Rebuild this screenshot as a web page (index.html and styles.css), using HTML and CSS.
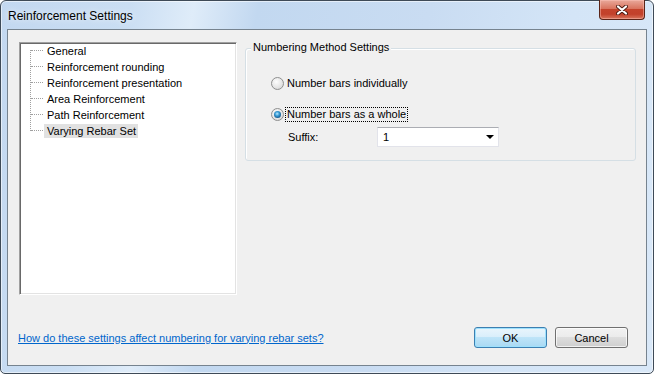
FILE: index.html
```html
<!DOCTYPE html>
<html>
<head>
    <title>Reinforcement Settings</title>
    <link rel="stylesheet" href="styles.css">
</head>
<body>
    <div class="window">
        <div class="titlebar">
            <span class="title">Reinforcement Settings</span>
            <div class="close-btn">
                <svg width="12" height="10" viewBox="0 0 12 10">
                    <path d="M2 1.5 L10 8.5 M10 1.5 L2 8.5" stroke="#4a1a12" stroke-width="4" stroke-linecap="round"/>
                    <path d="M2 1.5 L10 8.5 M10 1.5 L2 8.5" stroke="#fff" stroke-width="2.2" stroke-linecap="round"/>
                </svg>
            </div>
        </div>

        <div class="client">
            <div class="main">
                <!-- Settings tree -->
                <div class="tree">
                    <ul class="tree-list">
                        <li><span class="node">General</span></li>
                        <li><span class="node">Reinforcement rounding</span></li>
                        <li><span class="node">Reinforcement presentation</span></li>
                        <li><span class="node">Area Reinforcement</span></li>
                        <li><span class="node">Path Reinforcement</span></li>
                        <li><span class="node selected">Varying Rebar Set</span></li>
                    </ul>
                </div>

                <!-- Numbering group -->
                <div class="group">
                    <div class="group-title">Numbering Method Settings</div>
                    <div class="option-row first">
                        <span class="radio"></span>
                        <span class="option-label">Number bars individually</span>
                    </div>
                    <div class="option-row second">
                        <span class="radio checked"></span>
                        <span class="option-label focused">Number bars as a whole</span>
                    </div>
                    <div class="suffix-row">
                        <span class="suffix-label">Suffix:</span>
                        <div class="combo">
                            <span class="combo-value">1</span>
                            <span class="combo-arrow"></span>
                        </div>
                    </div>
                </div>
            </div>

            <div class="footer">
                <a href="#" class="help-link">How do these settings affect numbering for varying rebar sets?</a>
                <div class="buttons">
                    <button class="btn default">OK</button>
                    <button class="btn">Cancel</button>
                </div>
            </div>
        </div>
    </div>
</body>
</html>
```

FILE: styles.css
```css
body {
    margin: 0;
    background: #fff;
    font-family: "Liberation Sans", Arial, sans-serif;
    font-size: 11px;
    color: #000;
}
.window {
    width: 654px;
    height: 374px;
    box-sizing: border-box;
    display: flex;
    flex-direction: column;
    padding: 0 6px 7px 6px;
    border: 1px solid #3e4a57;
    border-radius: 6px 6px 5px 5px;
    background: linear-gradient(100deg, #c3d8f0 0%, #cadef3 18%, #dfecf9 27%, #c2d8f0 36%, #c9dcf2 60%, #d4e5f7 80%, #d9e8f8 100%);
    box-shadow: inset 0 0 0 1px rgba(255,255,255,0.55);
}
.titlebar {
    height: 28px;
    flex-shrink: 0;
    display: flex;
    align-items: flex-start;
}
.title {
    padding: 8px 0 0 1px;
    font-size: 12px;
    line-height: 14px;
    color: #000;
    text-shadow: 0 0 6px rgba(255,255,255,0.9);
}
.close-btn {
    margin: -1px 2px 0 auto;
    width: 46px;
    height: 20px;
    box-sizing: border-box;
    border: 1px solid #5a2418;
    border-top: none;
    border-radius: 0 0 4px 4px;
    background: linear-gradient(#e9a99b 0%, #d9745f 45%, #c4432c 50%, #c2412b 75%, #d8755d 100%);
    box-shadow: inset 0 0 0 1px rgba(255,200,190,0.45);
    display: flex;
    align-items: center;
    justify-content: center;
}
.client {
    flex: 1;
    display: flex;
    flex-direction: column;
    padding: 12px 10px 0 11px;
    background: #f0f0f0;
    border: 1px solid #76838f;
}
.main {
    display: flex;
    gap: 8px;
    height: 253px;
}

/* tree */
.tree {
    width: 218px;
    box-sizing: border-box;
    border: 1px solid;
    border-color: #a0a0a0 #fff #fff #a0a0a0;
    box-shadow: inset 1px 1px #696969, inset -1px -1px #e3e3e3;
    background: #fff;
    padding: 1px;
}
.tree-list {
    position: relative;
    list-style: none;
    margin: -2px 0 0 0;
    padding: 0;
}
.tree-list::before {
    content: "";
    position: absolute;
    left: 9px;
    top: 8px;
    bottom: 7px;
    border-left: 1px dotted #a0a0a0;
}
.tree-list li {
    position: relative;
    height: 16px;
    line-height: 16px;
    padding-left: 23px;
    white-space: nowrap;
}
.tree-list li::before {
    content: "";
    position: absolute;
    left: 10px;
    top: 8px;
    width: 12px;
    border-top: 1px dotted #a0a0a0;
}
.node {
    display: inline-block;
    line-height: 14px;
    padding: 0 2px 0 3px;
    vertical-align: middle;
}
.node.selected { background: #e1e1e1; }

/* group box */
.group {
    width: 391px;
    box-sizing: border-box;
    align-self: flex-start;
    margin-top: 6px;
    border: 1px solid #d5dfe5;
    border-radius: 3px;
    box-shadow: inset 1px 1px #fff;
    padding-bottom: 13px;
}
.group-title {
    display: table;
    margin: -9px 0 0 5px;
    padding: 0 2px;
    line-height: 15px;
    background: #f0f0f0;
}
.option-row {
    display: flex;
    align-items: center;
    height: 16px;
    padding-left: 25px;
}
.option-row.first { margin-top: 20px; }
.option-row.second { margin-top: 15px; }
.radio {
    width: 13px;
    height: 13px;
    box-sizing: border-box;
    border-radius: 50%;
    border: 1px solid #8e8f8f;
    background: radial-gradient(circle at 40% 35%, #fdfdfd 0%, #e6e6e6 55%, #cfcfcf 100%);
    margin-right: 1px;
    display: flex;
    align-items: center;
    justify-content: center;
}
.radio.checked::after {
    content: "";
    width: 7px;
    height: 7px;
    border-radius: 50%;
    background: radial-gradient(circle at 45% 40%, #bfe9ff 0%, #3a9fd8 35%, #1a5f95 70%, #0d3a63 100%);
}
.option-label {
    border: 1px dotted transparent;
    padding: 0 1px 0 1px;
    line-height: 13px;
}
.option-label.focused { border-color: #000; }
.suffix-row {
    display: flex;
    align-items: center;
    margin-top: 5px;
    padding-left: 42px;
}
.suffix-label { width: 89px; }
.combo {
    width: 122px;
    height: 20px;
    box-sizing: border-box;
    display: flex;
    align-items: center;
    justify-content: space-between;
    padding: 0 4px 0 5px;
    background: #fff;
    border: 1px solid #e2e3ea;
    border-top-color: #abadb3;
}
.combo-arrow {
    width: 0;
    height: 0;
    border-left: 4px solid transparent;
    border-right: 4px solid transparent;
    border-top: 4px solid #000;
}

/* footer */
.footer {
    display: flex;
    align-items: center;
    justify-content: space-between;
    margin: 32px 8px 0 -1px;
}
.help-link {
    color: #0066cc;
    text-decoration: underline;
}
.buttons {
    display: flex;
    gap: 8px;
}
.btn {
    width: 73px;
    height: 21px;
    padding: 0;
    font-family: inherit;
    font-size: 11px;
    color: #000;
    border: 1px solid #707070;
    border-radius: 3px;
    background: linear-gradient(#f2f2f2 0%, #ebebeb 50%, #dddddd 50%, #cfcfcf 100%);
    box-shadow: inset 0 0 0 1px rgba(255,255,255,0.7);
}
.btn.default {
    border-color: #3c7fb1;
    background: linear-gradient(#e9f5fc 0%, #d8eefb 50%, #bee4f8 50%, #a9d9f3 100%);
    box-shadow: inset 0 0 0 1px #9ee1fd;
}
```
